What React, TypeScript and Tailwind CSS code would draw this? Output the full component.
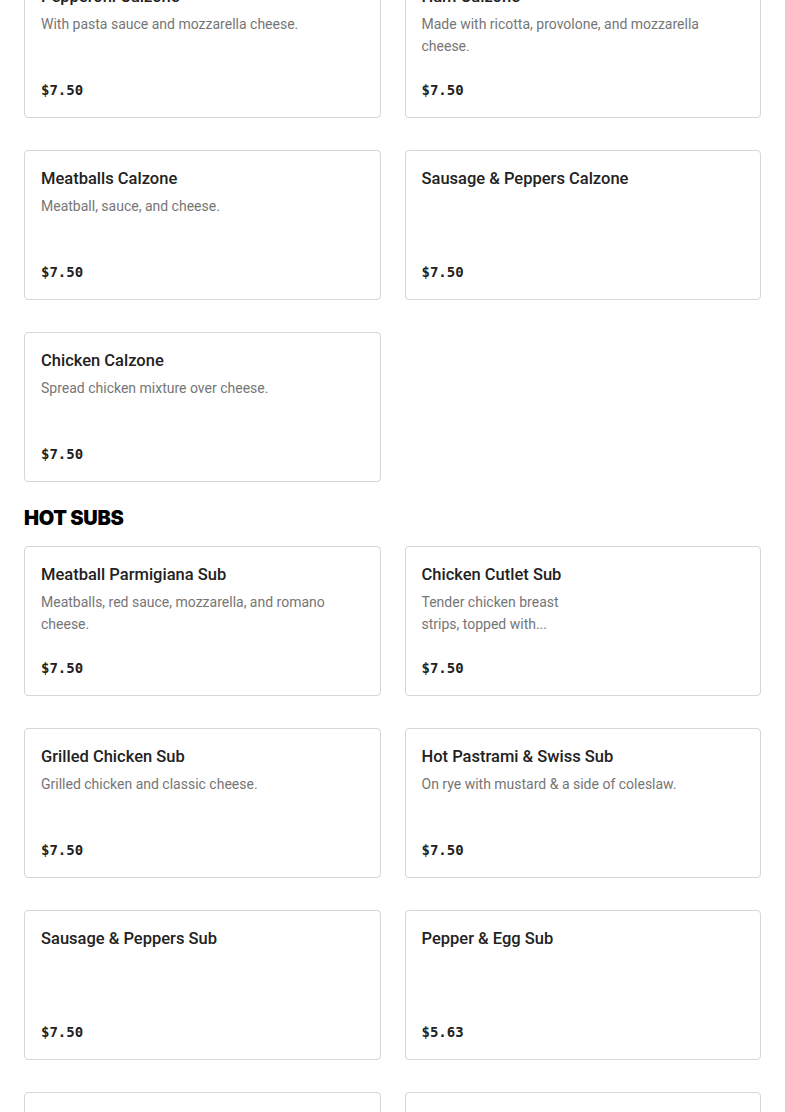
type Item = {
  name: string;
  desc?: string;
  price: string;
  narrow?: boolean;
};

const calzones: Item[] = [
  { name: 'Pepperoni Calzone', desc: 'With pasta sauce and mozzarella cheese.', price: '$7.50' },
  { name: 'Ham Calzone', desc: 'Made with ricotta, provolone, and mozzarella cheese.', price: '$7.50' },
  { name: 'Meatballs Calzone', desc: 'Meatball, sauce, and cheese.', price: '$7.50' },
  { name: 'Sausage & Peppers Calzone', price: '$7.50' },
  { name: 'Chicken Calzone', desc: 'Spread chicken mixture over cheese.', price: '$7.50' },
];

const hotSubs: Item[] = [
  { name: 'Meatball Parmigiana Sub', desc: 'Meatballs, red sauce, mozzarella, and romano cheese.', price: '$7.50' },
  { name: 'Chicken Cutlet Sub', desc: 'Tender chicken breast strips, topped with...', price: '$7.50', narrow: true },
  { name: 'Grilled Chicken Sub', desc: 'Grilled chicken and classic cheese.', price: '$7.50' },
  { name: 'Hot Pastrami & Swiss Sub', desc: 'On rye with mustard & a side of coleslaw.', price: '$7.50' },
  { name: 'Sausage & Peppers Sub', price: '$7.50' },
  { name: 'Pepper & Egg Sub', price: '$5.63' },
  { name: 'Italian Sausage Sub', price: '$7.50' },
  { name: 'Steak & Cheese Sub', price: '$7.50' },
];

function MenuCard({ item }: { item: Item }) {
  return (
    <div className="h-[150px] rounded-[4px] border border-[#d6d6d6] bg-white px-4 pt-4 pb-4 flex flex-col justify-between">
      <div>
        <h3 className="text-[16.5px] leading-6 font-medium text-[#222222]">{item.name}</h3>
        {item.desc && (
          <p
            className={
              'mt-1 text-[14px] leading-[22px] text-[#767676] ' + (item.narrow ? 'max-w-[150px]' : 'max-w-[305px]')
            }
          >
            {item.desc}
          </p>
        )}
      </div>
      <div className="text-[14px] leading-6 font-bold text-[#222222] font-['DejaVu_Sans_Mono',monospace] translate-y-px">
        {item.price}
      </div>
    </div>
  );
}

export default function App() {
  return (
    <div className="min-h-screen bg-white px-6 font-['Roboto','Noto_Sans',sans-serif] overflow-hidden">
      <div className="-mt-[32px]">
        {/* Calzones (scrolled) */}
        <div className="grid grid-cols-2 gap-x-6 gap-y-8">
          {calzones.map((it) => (
            <MenuCard key={it.name} item={it} />
          ))}
        </div>

        {/* Hot subs */}
        <h2 className="mt-[22px] mb-[14px] text-[20px] leading-7 font-black text-black font-['Inter',sans-serif] tracking-[-0.3px]">
          HOT SUBS
        </h2>
        <div className="grid grid-cols-2 gap-x-6 gap-y-8 pb-10">
          {hotSubs.map((it) => (
            <MenuCard key={it.name} item={it} />
          ))}
        </div>
      </div>
    </div>
  );
}
